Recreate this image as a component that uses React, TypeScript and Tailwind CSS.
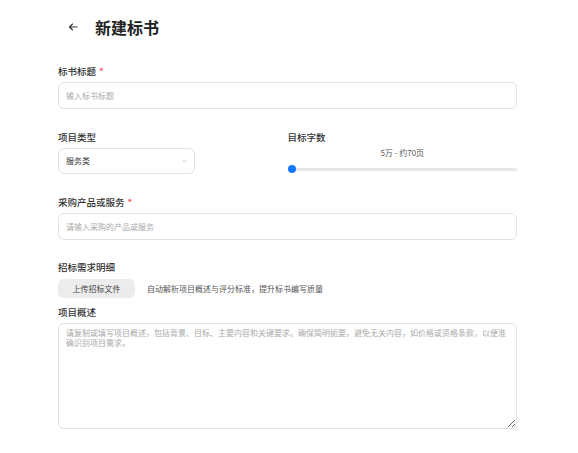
import React from "react";

const font = { fontFamily: '"Noto Sans CJK SC", "Noto Sans", sans-serif' };

function Label({ text, required }: { text: string; required?: boolean }) {
  return (
    <div className="h-[14px] flex items-center text-[9.5px] leading-[14px] text-[#333] font-medium">
      {text}
      {required && <span className="ml-[3px] text-[#ff4d4f]">*</span>}
    </div>
  );
}

export default function App() {
  return (
    <div className="w-[578px] h-[453px] bg-white pl-[58px] pr-[61px]" style={font}>
      <div className="h-[54px] flex items-center pl-[10px]">
        <svg width="10" height="10" viewBox="0 0 10 10" className="text-[#333]">
          <path d="M9 5H1.5M4.5 2 1.5 5l3 3" fill="none" stroke="currentColor" strokeWidth="1.1" strokeLinecap="round" strokeLinejoin="round" />
        </svg>
        <span className="ml-[17px] text-[16px] font-semibold text-[#222] leading-[20px]">新建标书</span>
      </div>

      <div className="mt-[10px]">
        <Label text="标书标题" required />
        <input
          className="mt-[4px] block w-full h-[27px] rounded-[6px] border border-[#e3e3e3] px-[7px] text-[8px] outline-none placeholder:text-[#aaa]"
          placeholder="输入标书标题"
        />
      </div>

      <div className="mt-[21px] grid grid-cols-2">
        <div>
          <Label text="项目类型" />
          <div className="mt-[4px] w-[137px] h-[26px] rounded-[6px] border border-[#e3e3e3] flex items-center justify-between px-[7px]">
            <span className="text-[8px] text-[#333]">服务类</span>
            <svg width="5" height="4" viewBox="0 0 5 4">
              <path d="M0.8 1.2 2.5 2.8 4.2 1.2" fill="none" stroke="#aaa" strokeWidth="0.7" />
            </svg>
          </div>
        </div>
        <div>
          <Label text="目标字数" />
          <div className="mt-[3px] h-[12px] flex items-center justify-center text-[8px] text-[#555]">5万 - 约70页</div>
          <div className="mt-[6px] relative h-[8px] flex items-center">
            <div className="w-full h-[3px] rounded-full bg-[#e6e6e6]" />
            <div className="absolute left-0 top-0 w-[8px] h-[8px] rounded-full bg-[#1677ff]" />
          </div>
        </div>
      </div>

      <div className="mt-[21px]">
        <Label text="采购产品或服务" required />
        <input
          className="mt-[4px] block w-full h-[27px] rounded-[6px] border border-[#e3e3e3] px-[7px] text-[8px] outline-none placeholder:text-[#aaa]"
          placeholder="请输入采购的产品或服务"
        />
      </div>

      <div className="mt-[20px]">
        <Label text="招标需求明细" />
        <div className="mt-[5px] flex items-center">
          <div className="w-[77px] h-[19px] rounded-[6px] bg-[#ececec] flex items-center justify-center text-[8px] text-[#444]">上传招标文件</div>
          <span className="ml-[12px] text-[8px] text-[#555]">自动解析项目概述与评分标准，提升标书编写质量</span>
        </div>
      </div>

      <div className="mt-[7px]">
        <Label text="项目概述" />
        <textarea
          className="mt-[4px] block w-full h-[106px] rounded-[6px] border border-[#e3e3e3] px-[7px] py-[4px] text-[8px] leading-[10px] outline-none placeholder:text-[#aaa]"
          placeholder="请复制或填写项目概述，包括背景、目标、主要内容和关键要求。确保简明扼要，避免无关内容，如价格或资格条款，以便准确识别项目需求。"
        />
      </div>
    </div>
  );
}
